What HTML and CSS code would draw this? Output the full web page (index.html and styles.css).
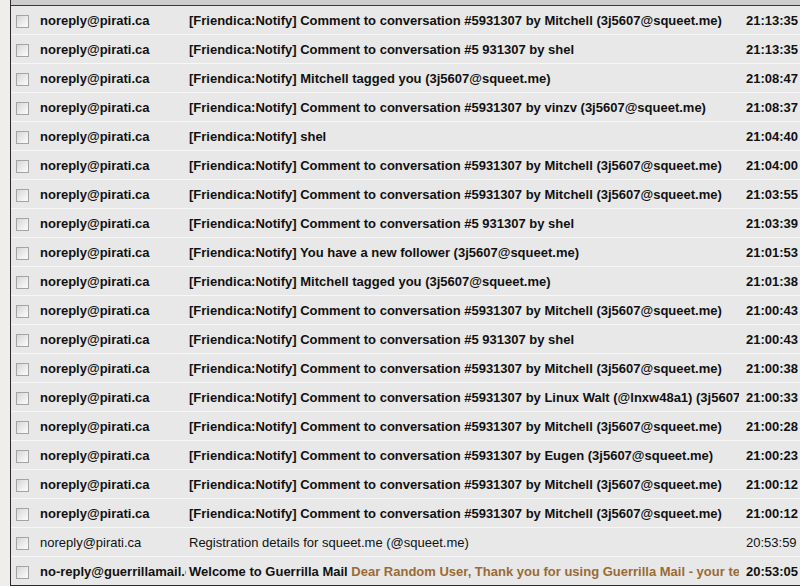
FILE: index.html
```html
<!DOCTYPE html>
<html lang="en">
<head>
  <meta charset="UTF-8">
  <title>Inbox</title>
  <link rel="stylesheet" href="styles.css">
</head>
<body>
  <div class="frame">
    <div class="strip"></div>
    <div class="list">
      <div class="row unread"><div class="chk"><input type="checkbox"></div><div class="from">noreply@pirati.ca</div><div class="subj">[Friendica:Notify] Comment to conversation #5931307 by Mitchell (3j5607@squeet.me)</div><div class="time">21:13:35</div></div>
      <div class="row unread"><div class="chk"><input type="checkbox"></div><div class="from">noreply@pirati.ca</div><div class="subj">[Friendica:Notify] Comment to conversation #5 931307 by shel</div><div class="time">21:13:35</div></div>
      <div class="row unread"><div class="chk"><input type="checkbox"></div><div class="from">noreply@pirati.ca</div><div class="subj">[Friendica:Notify] Mitchell tagged you (3j5607@squeet.me)</div><div class="time">21:08:47</div></div>
      <div class="row unread"><div class="chk"><input type="checkbox"></div><div class="from">noreply@pirati.ca</div><div class="subj">[Friendica:Notify] Comment to conversation #5931307 by vinzv (3j5607@squeet.me)</div><div class="time">21:08:37</div></div>
      <div class="row unread"><div class="chk"><input type="checkbox"></div><div class="from">noreply@pirati.ca</div><div class="subj">[Friendica:Notify] shel</div><div class="time">21:04:40</div></div>
      <div class="row unread"><div class="chk"><input type="checkbox"></div><div class="from">noreply@pirati.ca</div><div class="subj">[Friendica:Notify] Comment to conversation #5931307 by Mitchell (3j5607@squeet.me)</div><div class="time">21:04:00</div></div>
      <div class="row unread"><div class="chk"><input type="checkbox"></div><div class="from">noreply@pirati.ca</div><div class="subj">[Friendica:Notify] Comment to conversation #5931307 by Mitchell (3j5607@squeet.me)</div><div class="time">21:03:55</div></div>
      <div class="row unread"><div class="chk"><input type="checkbox"></div><div class="from">noreply@pirati.ca</div><div class="subj">[Friendica:Notify] Comment to conversation #5 931307 by shel</div><div class="time">21:03:39</div></div>
      <div class="row unread"><div class="chk"><input type="checkbox"></div><div class="from">noreply@pirati.ca</div><div class="subj">[Friendica:Notify] You have a new follower (3j5607@squeet.me)</div><div class="time">21:01:53</div></div>
      <div class="row unread"><div class="chk"><input type="checkbox"></div><div class="from">noreply@pirati.ca</div><div class="subj">[Friendica:Notify] Mitchell tagged you (3j5607@squeet.me)</div><div class="time">21:01:38</div></div>
      <div class="row unread"><div class="chk"><input type="checkbox"></div><div class="from">noreply@pirati.ca</div><div class="subj">[Friendica:Notify] Comment to conversation #5931307 by Mitchell (3j5607@squeet.me)</div><div class="time">21:00:43</div></div>
      <div class="row unread"><div class="chk"><input type="checkbox"></div><div class="from">noreply@pirati.ca</div><div class="subj">[Friendica:Notify] Comment to conversation #5 931307 by shel</div><div class="time">21:00:43</div></div>
      <div class="row unread"><div class="chk"><input type="checkbox"></div><div class="from">noreply@pirati.ca</div><div class="subj">[Friendica:Notify] Comment to conversation #5931307 by Mitchell (3j5607@squeet.me)</div><div class="time">21:00:38</div></div>
      <div class="row unread"><div class="chk"><input type="checkbox"></div><div class="from">noreply@pirati.ca</div><div class="subj">[Friendica:Notify] Comment to conversation #5931307 by Linux Walt (@lnxw48a1) (3j5607@squeet.me)</div><div class="time">21:00:33</div></div>
      <div class="row unread"><div class="chk"><input type="checkbox"></div><div class="from">noreply@pirati.ca</div><div class="subj">[Friendica:Notify] Comment to conversation #5931307 by Mitchell (3j5607@squeet.me)</div><div class="time">21:00:28</div></div>
      <div class="row unread"><div class="chk"><input type="checkbox"></div><div class="from">noreply@pirati.ca</div><div class="subj">[Friendica:Notify] Comment to conversation #5931307 by Eugen (3j5607@squeet.me)</div><div class="time">21:00:23</div></div>
      <div class="row unread"><div class="chk"><input type="checkbox"></div><div class="from">noreply@pirati.ca</div><div class="subj">[Friendica:Notify] Comment to conversation #5931307 by Mitchell (3j5607@squeet.me)</div><div class="time">21:00:12</div></div>
      <div class="row unread"><div class="chk"><input type="checkbox"></div><div class="from">noreply@pirati.ca</div><div class="subj">[Friendica:Notify] Comment to conversation #5931307 by Mitchell (3j5607@squeet.me)</div><div class="time">21:00:12</div></div>
      <div class="row"><div class="chk"><input type="checkbox"></div><div class="from">noreply@pirati.ca</div><div class="subj">Registration details for squeet.me (@squeet.me)</div><div class="time">20:53:59</div></div>
      <div class="row unread"><div class="chk"><input type="checkbox"></div><div class="from">no-reply@guerrillamail.com</div><div class="subj">Welcome to Guerrilla Mail <span class="excerpt">Dear Random User, Thank you for using Guerrilla Mail - your temporary email address</span></div><div class="time">20:53:05</div></div>
    </div>
  </div>
</body>
</html>
```

FILE: styles.css
```css
html, body {
  margin: 0;
  padding: 0;
}
body {
  background-color: #efeeea;
  font-family: "Liberation Sans", Arial, sans-serif;
  font-size: 13px;
  color: #111;
  overflow: hidden;
}
.frame {
  margin-left: 10px;
  border-left: 1px solid #2b2b2b;
  height: 586px;
}
.strip {
  height: 5px;
  background-color: #cdcdcd;
}
.list {
  border-top: 1px solid #3a3a3a;
  border-bottom: 1px solid #2b2b2b;
  background-color: #e8e8e8;
}
.row {
  display: grid;
  grid-template-columns: 26px 149px 553px 1fr;
  height: 28px;
  align-items: center;
  border-bottom: 1px solid #f7f7f7;
  white-space: nowrap;
}
.row:last-child {
  border-bottom: none;
}
.row > div {
  overflow: hidden;
}
.unread {
  font-weight: bold;
}
.chk {
  padding-left: 5px;
  display: flex;
  align-items: center;
  padding-top: 2px;
}
.chk input {
  appearance: none;
  -webkit-appearance: none;
  width: 13px;
  height: 13px;
  margin: 0;
  border: 1px solid #a4a4a4;
  background: linear-gradient(135deg, #d6d6d6, #f6f6f6 80%);
  box-sizing: border-box;
}
.from {
  padding-left: 3px;
}
.subj {
  padding-left: 3px;
}
.time {
  padding-left: 7px;
}
.excerpt {
  color: #9a6a34;
}
```
